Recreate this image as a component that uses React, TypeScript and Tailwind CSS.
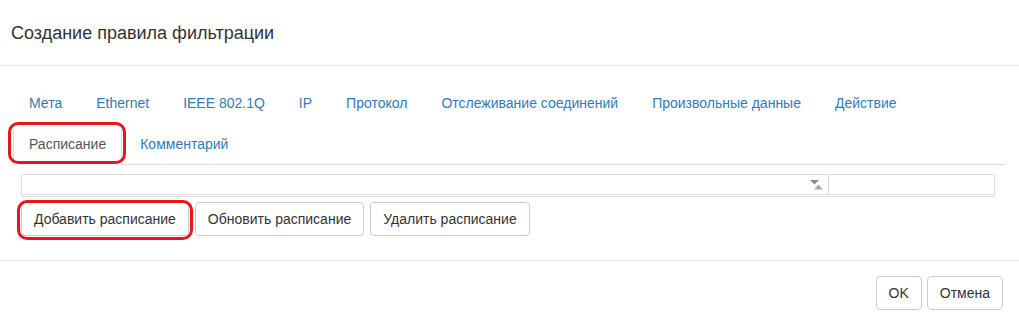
import React from "react";

const tabsTop = [
  "Мета",
  "Ethernet",
  "IEEE 802.1Q",
  "IP",
  "Протокол",
  "Отслеживание соединений",
  "Произвольные данные",
  "Действие",
];

function SortIcon() {
  return (
    <svg width="14" height="10" viewBox="0 0 14 10">
      <polygon points="0,0 9,0 4.5,4.5" fill="#8a8a8a" />
      <polygon points="4,9.5 13,9.5 8.5,4.5" fill="#a8a8a8" />
    </svg>
  );
}

function Btn({ children }: { children: React.ReactNode }) {
  return (
    <button className="h-[34px] px-[12px] border border-[#ccc] rounded-[4px] bg-white text-[14px] leading-[20px] text-[#333]">
      {children}
    </button>
  );
}

export default function App() {
  return (
    <div
      className="relative w-[1019px] h-[325px] bg-white text-[#333] overflow-hidden"
      style={{ fontFamily: '"Liberation Sans", Arial, sans-serif' }}
    >
      <div className="h-[66px] border-b border-[#e5e5e5] flex items-center pl-[11px]">
        <h4 className="text-[18px] leading-[26px] text-[#333]">Создание правила фильтрации</h4>
      </div>

      <div className="pt-[16px] pb-[24px]">
        <ul className="flex flex-wrap ml-[13px] mr-[14px] border-b border-[#ddd] text-[14px] leading-[20px]">
          {tabsTop.map((t) => (
            <li key={t} className="-mb-px mr-[2px]">
              <a className="block px-[15px] py-[10px] border border-transparent text-[#337ab7]">{t}</a>
            </li>
          ))}
          <li className="basis-full h-0" />
          <li className="-mb-px mr-[2px]">
            <a className="block px-[15px] py-[10px] border border-[#ddd] border-b-transparent rounded-t-[4px] bg-white text-[#555]">
              Расписание
            </a>
          </li>
          <li className="-mb-px mr-[2px]">
            <a className="block px-[15px] py-[10px] border border-transparent text-[#337ab7]">Комментарий</a>
          </li>
        </ul>

        <div className="mt-[9px] ml-[21px] mr-[24px]">
          <div className="flex h-[21px] border border-[#ddd]">
            <div className="flex-1 flex items-center justify-end pr-[4px]">
              <SortIcon />
            </div>
            <div className="w-[166px] border-l border-[#ddd]" />
          </div>
          <div className="mt-px border-t border-[#ddd]" />
          <div className="mt-[5px] flex gap-[6px]">
            <Btn>Добавить расписание</Btn>
            <Btn>Обновить расписание</Btn>
            <Btn>Удалить расписание</Btn>
          </div>
        </div>
      </div>

      <div className="border-t border-[#e5e5e5] pt-[15px] pr-[16px] flex justify-end gap-[5px]">
        <Btn>OK</Btn>
        <Btn>Отмена</Btn>
      </div>

      <div className="absolute left-[8px] top-[122px] w-[118px] h-[42px] border-[3px] border-[#e8151f] rounded-[10px]" />
      <div className="absolute left-[17px] top-[200px] w-[176px] h-[40px] border-[3px] border-[#e8151f] rounded-[10px]" />
    </div>
  );
}
